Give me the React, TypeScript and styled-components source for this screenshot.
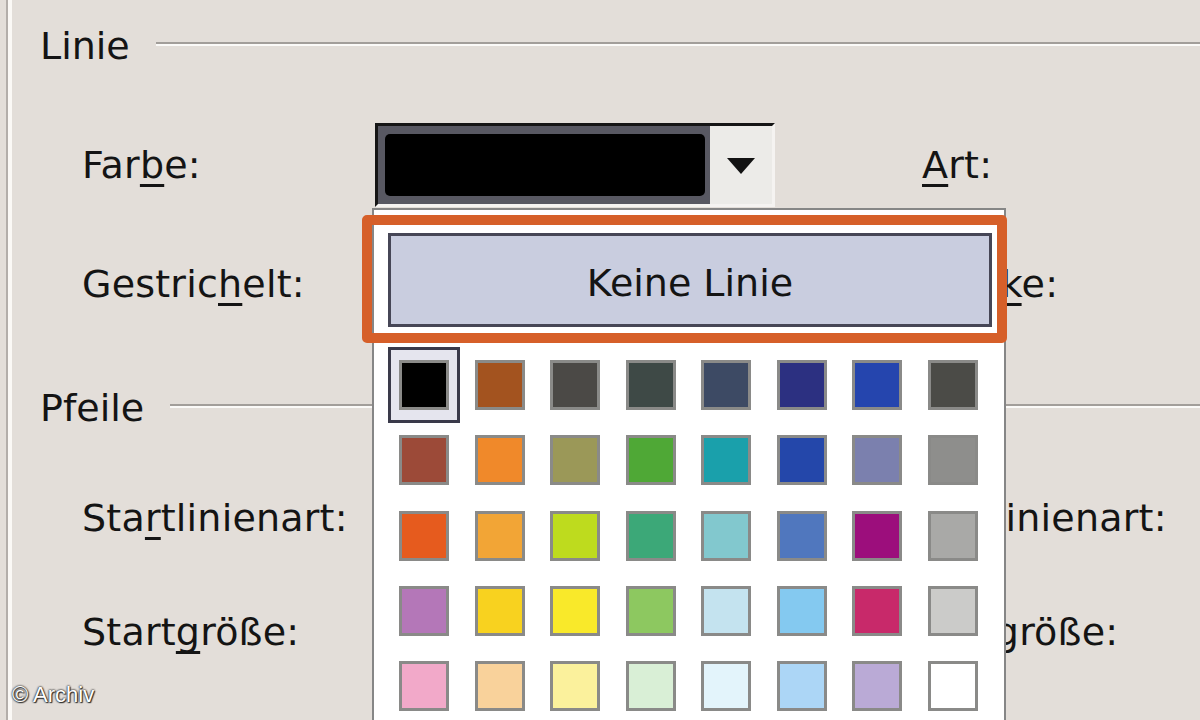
import React from 'react'
import styled, { createGlobalStyle } from 'styled-components'

const GlobalStyle = createGlobalStyle`
  html, body {
    margin: 0;
    padding: 0;
    background: #e3ded9;
  }
  body {
    font-family: "DejaVu Sans", "Liberation Sans", sans-serif;
    color: #141414;
  }
`

// Office-Farbpalette, Zeile für Zeile
const palette: string[][] = [
  ['#000000', '#a3531f', '#4b4946', '#3e4946', '#3d4a64', '#2c3081', '#2545ae', '#4b4b47'],
  ['#9c4a38', '#f0892a', '#9b9858', '#4fa836', '#1aa0ab', '#2447aa', '#7b80ae', '#8e8e8c'],
  ['#e65b1e', '#f2a536', '#bedb1e', '#3ca878', '#82c8ce', '#5077be', '#9c0e7c', '#a9a9a7'],
  ['#b477b8', '#f8d21f', '#f9e92a', '#8dc860', '#c4e3ef', '#84c9f0', '#c8296a', '#cbcbc9'],
  ['#f2a9c9', '#f9d29b', '#fbf19c', '#d9efd6', '#e3f4fb', '#acd6f6', '#baaad6', '#ffffff'],
]

const Page = styled.div`
  position: relative;
  width: 1200px;
  height: 720px;
  overflow: hidden;
  background: #e3ded9;
`

const Frame = styled.div`
  height: 100%;
  margin-left: 6px;
  border-left: 2px solid #b3aeaa;
`

const FrameInner = styled.div`
  height: 100%;
  box-sizing: border-box;
  border-left: 4px solid #fbf9f6;
  padding: 16px 0 0 28px;
  display: flex;
  flex-direction: column;
`

const Section = styled.section<{ $top: number }>`
  display: flex;
  flex-direction: column;
  margin-top: ${p => p.$top}px;
`

const SectionHeader = styled.div<{ $below: number }>`
  display: flex;
  align-items: center;
  gap: 26px;
  height: 60px;
  margin-bottom: ${p => p.$below}px;
`

const SectionTitle = styled.span`
  font-size: 38px;
  line-height: 1;
`

const Rule = styled.div`
  flex: 1;
  height: 0;
  margin-top: -4px;
  border-top: 2px solid #a29e9a;
  border-bottom: 2px solid #fbfaf8;
`

const Rows = styled.div<{ $gap: number }>`
  display: flex;
  flex-direction: column;
  gap: ${p => p.$gap}px;
  padding-left: 42px;
`

const Row = styled.div`
  display: grid;
  grid-template-columns: 293px 547px auto;
  align-items: center;
  height: 82px;
`

const Label = styled.span`
  font-size: 38px;
  line-height: 1;
  letter-spacing: 0.2px;
  white-space: nowrap;
`

const Acc = styled.span`
  text-decoration: underline;
  text-decoration-thickness: 3px;
  text-underline-offset: 6px;
  text-decoration-skip-ink: none;
`

const Combo = styled.div`
  display: flex;
  width: 400px;
  height: 84px;
  box-sizing: border-box;
  border-style: solid;
  border-width: 3px;
  border-color: #151515 #f5f3f1 #f5f3f1 #151515;
  background: #585862;
`

const ColorField = styled.div<{ $color: string }>`
  flex: 1;
  margin: 8px 5px 8px 7px;
  border-radius: 5px;
  background: ${p => p.$color};
`

const DropButton = styled.div`
  width: 62px;
  display: flex;
  align-items: center;
  justify-content: center;
  background: #ecebe8;
`

const Arrow = styled.span`
  width: 0;
  height: 0;
  border-left: 14px solid transparent;
  border-right: 14px solid transparent;
  border-top: 16px solid #121212;
  margin-top: 2px;
`

const Popup = styled.div`
  position: absolute;
  left: 372px;
  top: 208px;
  width: 634px;
  height: 560px;
  box-sizing: border-box;
  border: 2px solid #868686;
  background: #fff;
  padding: 23px 12px 0 14px;
  z-index: 2;
`

const Highlight = styled.div`
  position: absolute;
  left: -12px;
  top: 5px;
  width: 645px;
  height: 128px;
  box-sizing: border-box;
  border: 10px solid #d65f29;
  border-radius: 5px;
  pointer-events: none;
`

const NoLineButton = styled.div`
  height: 94px;
  box-sizing: border-box;
  border: 3px solid #464656;
  background: #c9cddf;
  display: flex;
  align-items: center;
  justify-content: center;
  padding-top: 6px;
  font-size: 38px;
  line-height: 1;
`

const SwatchGrid = styled.div`
  margin-top: 20px;
  display: grid;
  grid-template-columns: repeat(8, 1fr);
  grid-auto-rows: 75.3px;
`

const Cell = styled.div<{ $selected?: boolean }>`
  display: flex;
  align-items: center;
  justify-content: center;
  box-sizing: border-box;
  width: 72px;
  height: 76px;
  border: 3px solid ${p => (p.$selected ? '#3a3a4a' : 'transparent')};
  background: ${p => (p.$selected ? '#e5e5ee' : 'transparent')};
`

const Swatch = styled.div<{ $color: string }>`
  width: 50px;
  height: 50px;
  box-sizing: border-box;
  border: 3px solid #8a8a88;
  background: ${p => p.$color};
`

const Credit = styled.div`
  position: absolute;
  left: 12px;
  bottom: 12px;
  font-family: "Liberation Sans", Arial, sans-serif;
  font-size: 22px;
  color: #fff;
  text-shadow: 0 0 2px #222, 0 0 2px #222, 1px 1px 1px #333;
`

const App = () => {
  return (
    <Page>
      <GlobalStyle />
      <Frame>
        <FrameInner>
          <Section $top={0}>
            <SectionHeader $below={47}>
              <SectionTitle>Linie</SectionTitle>
              <Rule />
            </SectionHeader>
            <Rows $gap={38}>
              <Row>
                <Label>Far<Acc>b</Acc>e:</Label>
                <Combo>
                  <ColorField $color="#000" />
                  <DropButton><Arrow /></DropButton>
                </Combo>
                <Label><Acc>A</Acc>rt:</Label>
              </Row>
              <Row>
                <Label>Gestric<Acc>h</Acc>elt:</Label>
                <span />
                <Label>Stär<Acc>k</Acc>e:</Label>
              </Row>
            </Rows>
          </Section>
          <Section $top={53}>
            <SectionHeader $below={39}>
              <SectionTitle>Pfeile</SectionTitle>
              <Rule />
            </SectionHeader>
            <Rows $gap={32}>
              <Row>
                <Label>Sta<Acc>r</Acc>tlinienart:</Label>
                <span />
                <Label>Endlinienart:</Label>
              </Row>
              <Row>
                <Label>Start<Acc>g</Acc>röße:</Label>
                <span />
                <Label>Endgröße:</Label>
              </Row>
            </Rows>
          </Section>
        </FrameInner>
      </Frame>

      <Popup>
        <NoLineButton>Keine Linie</NoLineButton>
        <SwatchGrid>
          {palette.flatMap((row, r) =>
            row.map((color, c) => (
              <Cell key={`${r}-${c}`} $selected={r === 0 && c === 0}>
                <Swatch $color={color} />
              </Cell>
            ))
          )}
        </SwatchGrid>
        <Highlight />
      </Popup>

      <Credit>© Archiv</Credit>
    </Page>
  )
}

export default App
